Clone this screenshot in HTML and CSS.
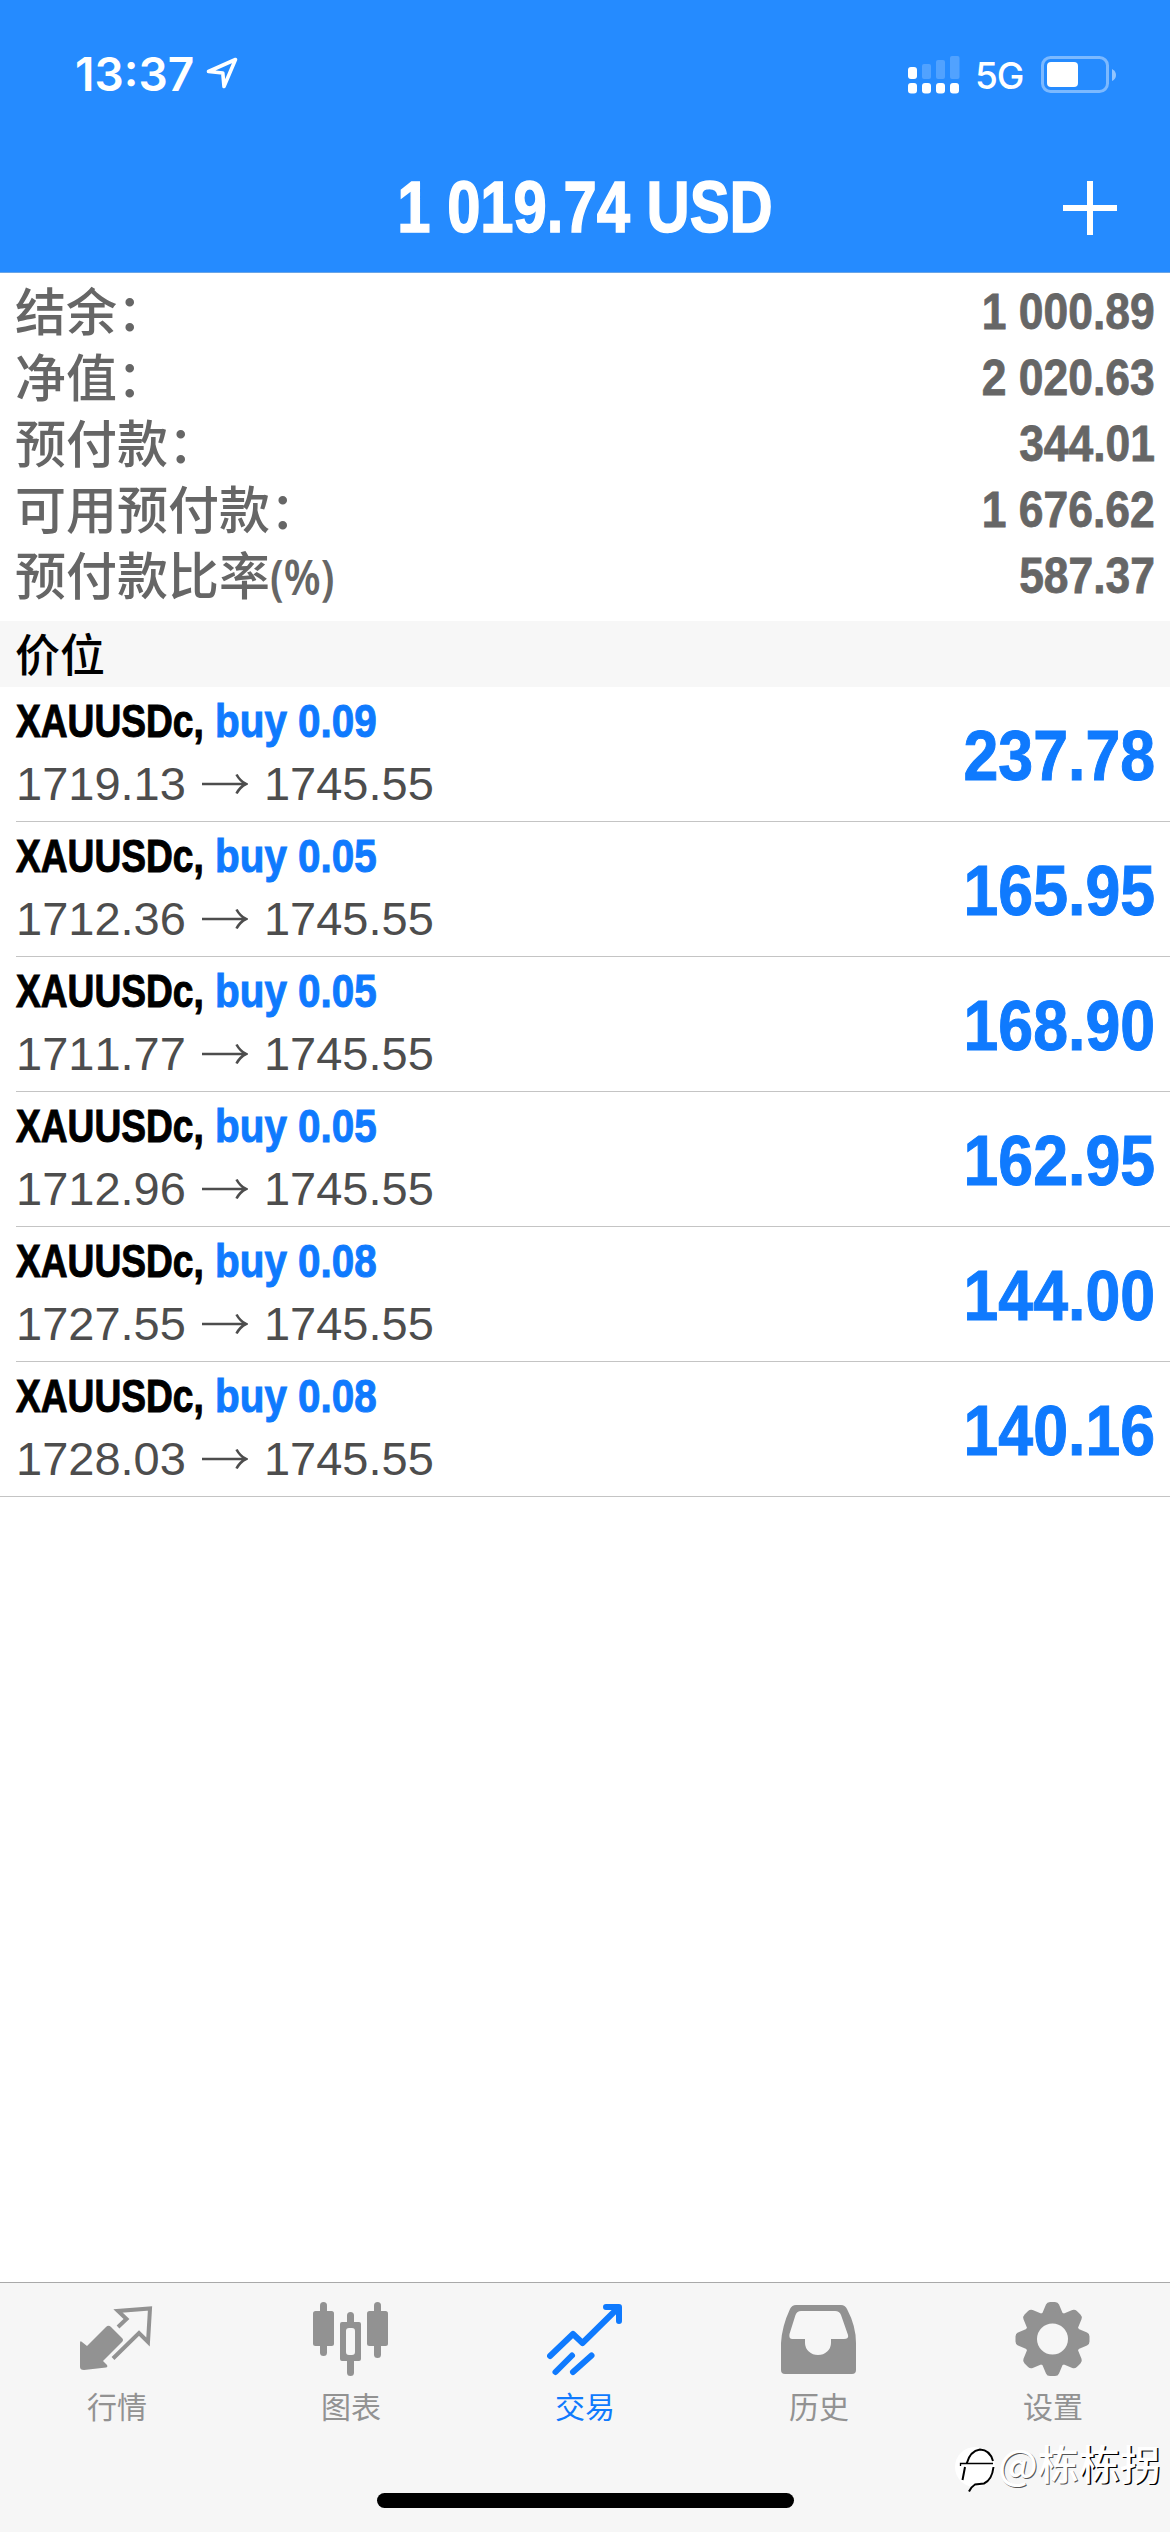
FILE: index.html
```html
<!DOCTYPE html>
<html lang="zh-CN">
<head>
<meta charset="utf-8">
<title>交易</title>
<link rel="stylesheet" href="styles.css">
</head>
<body>
<div class="app">
  <header class="header">
    <div class="status">
      <div class="status-left">
        <span class="time">13:37</span>
        <svg class="location" width="34" height="34" viewBox="0 0 34 34"><path d="M3.500 15.500 30.500 3.500 19 30.500 17.800 17Z" fill="none" stroke="#fff" stroke-width="3.600" stroke-linejoin="round"/></svg>
      </div>
      <div class="status-right">
        <svg width="52" height="38" viewBox="0 0 52 38" fill="#fff"><rect y="11" width="9" height="12" rx="3"/><g opacity=".2"><rect x="14" y="8" width="9" height="15" rx="2"/><rect x="28" y="4" width="9" height="19" rx="2"/><rect x="42" width="9.500" height="23" rx="2"/></g><rect y="27" width="9" height="10.500" rx="3"/><rect x="14" y="27" width="9" height="10.500" rx="3"/><rect x="28" y="27" width="9" height="10.500" rx="3"/><rect x="42" y="27" width="9" height="10.500" rx="3"/></svg>
        <span class="network">5G</span>
        <svg width="76" height="38" viewBox="0 0 76 38"><rect x="1.500" y="1.500" width="65" height="34" rx="8" fill="none" stroke="#fff" stroke-opacity=".4" stroke-width="3"/><rect x="6" y="6" width="31" height="25" rx="4" fill="#fff"/><path d="M71 13q4 2 4 6t-4 6z" fill="#fff" opacity=".5"/></svg>
      </div>
    </div>
    <div class="titlebar">
      <h1 class="total">1 019.74 USD</h1>
      <svg class="add" width="54" height="54" viewBox="0 0 54 54"><path d="M27 0v54M0 27h54" stroke="#fff" stroke-width="6"/></svg>
    </div>
  </header>

  <dl class="summary">
    <div class="summary-row"><dt>结余：</dt><dd>1 000.89</dd></div>
    <div class="summary-row"><dt>净值：</dt><dd>2 020.63</dd></div>
    <div class="summary-row"><dt>预付款：</dt><dd>344.01</dd></div>
    <div class="summary-row"><dt>可用预付款：</dt><dd>1 676.62</dd></div>
    <div class="summary-row"><dt>预付款比率<span class="percent">(%)</span></dt><dd>587.37</dd></div>
  </dl>

  <h2 class="section">价位</h2>
  <svg class="defs" width="0" height="0"><symbol id="arrow" viewBox="0 0 46 22"><path d="M0 11h43M34.500 1.500Q38 8 44 11Q38 14 34.500 20.500" fill="none" stroke="currentColor" stroke-width="2.600"/></symbol></svg>
  <ul class="positions">
    <li class="position"><div class="deal"><div class="name"><span class="symbol">XAUUSDc,</span><span class="side">buy 0.09</span></div><div class="prices"><span>1719.13</span><svg class="arrow"><use href="#arrow"/></svg><span>1745.55</span></div></div><div class="profit">237.78</div></li>
    <li class="position"><div class="deal"><div class="name"><span class="symbol">XAUUSDc,</span><span class="side">buy 0.05</span></div><div class="prices"><span>1712.36</span><svg class="arrow"><use href="#arrow"/></svg><span>1745.55</span></div></div><div class="profit">165.95</div></li>
    <li class="position"><div class="deal"><div class="name"><span class="symbol">XAUUSDc,</span><span class="side">buy 0.05</span></div><div class="prices"><span>1711.77</span><svg class="arrow"><use href="#arrow"/></svg><span>1745.55</span></div></div><div class="profit">168.90</div></li>
    <li class="position"><div class="deal"><div class="name"><span class="symbol">XAUUSDc,</span><span class="side">buy 0.05</span></div><div class="prices"><span>1712.96</span><svg class="arrow"><use href="#arrow"/></svg><span>1745.55</span></div></div><div class="profit">162.95</div></li>
    <li class="position"><div class="deal"><div class="name"><span class="symbol">XAUUSDc,</span><span class="side">buy 0.08</span></div><div class="prices"><span>1727.55</span><svg class="arrow"><use href="#arrow"/></svg><span>1745.55</span></div></div><div class="profit">144.00</div></li>
    <li class="position"><div class="deal"><div class="name"><span class="symbol">XAUUSDc,</span><span class="side">buy 0.08</span></div><div class="prices"><span>1728.03</span><svg class="arrow"><use href="#arrow"/></svg><span>1745.55</span></div></div><div class="profit">140.16</div></li>
  </ul>

  <footer class="footer">
    <nav class="tabs">
      <a class="tab">
        <svg class="icon" viewBox="0 0 76 76"><path fill="currentColor" d="M1 42q0-3 2-1l5 4L27 26q2.500-2.500 5 0L43 37q2 2 0 4L24 60l4 4q1 2-1 2.500L5 69q-4 0-4-3z"/><path fill="none" stroke="currentColor" stroke-width="4" d="M39 26 47.500 18 39 10 71 7.500 69 41 60 32 34 57.500"/></svg>
        <span>行情</span>
      </a>
      <a class="tab">
        <svg class="icon" viewBox="0 0 76 76" fill="currentColor"><rect x="0" y="10" width="21" height="35" rx="2.500"/><rect x="7" y="1" width="7" height="54" rx="3.500"/><rect x="54" y="10" width="21" height="35" rx="2.500"/><rect x="61" y="1" width="7" height="56" rx="3.500"/><path fill-rule="evenodd" d="M29 21h17q2 0 2 2v35q0 2-2 2H29q-2 0-2-2V23q0-2 2-2zM36 27q-3 0-3 3v21q0 3 3 3h3q3 0 3-3V30q0-3-3-3z"/><path d="M34 22V14.500a3.500 3.500 0 0 1 7 0V22zM34 59v12.500a3.500 3.500 0 0 0 7 0V59z"/></svg>
        <span>图表</span>
      </a>
      <a class="tab active">
        <svg class="icon" viewBox="0 0 76 76" fill="none" stroke="currentColor" stroke-width="6" stroke-linecap="round"><path stroke-linejoin="round" d="M3 55 26 33 35.500 42 71 7"/><path stroke-linejoin="round" d="M59 6H72V20"/><path d="M8.500 71 25 54.500M26 71 44.500 54.500"/><path d="M62 5h12v13z" fill="currentColor" stroke="none"/></svg>
        <span>交易</span>
      </a>
      <a class="tab">
        <svg class="icon" viewBox="0 0 76 76"><path fill="currentColor" fill-rule="evenodd" d="M15 4H60q4 0 6 4 9 17 9 34V69q0 4-4 4H4q-4 0-4-4V42Q1 25 9 8q2-4 6-4zM20 10q-4 0-5.500 4L8.500 33q-1 5 3 5H24v4a13 12 0 0 0 26 0V38H63q5 0 4-4L60 14q-1.500-4-6-4z"/></svg>
        <span>历史</span>
      </a>
      <a class="tab">
        <svg class="icon" viewBox="0 0 76 76"><g fill="currentColor"><path id="teeth" d="M27 13 31 3.500Q32 1 35 1H40Q43 1 44 3.500L48 13 48 63 44 72.500Q43 75 40 75H35Q32 75 31 72.500L27 63z"/><use href="#teeth" transform="rotate(45 37.500 38)"/><use href="#teeth" transform="rotate(90 37.500 38)"/><use href="#teeth" transform="rotate(135 37.500 38)"/><circle cx="37.500" cy="38" r="28"/></g><circle cx="37.500" cy="38" r="15.500" fill="#f6f6f6"/></svg>
        <span>设置</span>
      </a>
    </nav>
    <div class="home-indicator"></div>
    <div class="watermark">
      <svg width="42" height="50" viewBox="0 0 42 50"><circle cx="20" cy="20" r="20" fill="#fff"/><g fill="none" stroke="#000"><path d="M5.500 19v-2.500H38" stroke-width="1.300"/><path d="M11.700 16.500Q15 4 25 2.500 35 3 38 14M10 20 7.500 33M38.500 20Q37 33 29 36.500L20 37.500Q16 40 14 44.500" stroke-width="2"/></g></svg>
      <span class="handle"><span class="faint">@栋</span>栋拐</span>
    </div>
  </footer>
</div>
</body>
</html>
```
FILE: styles.css
```css
* { box-sizing: border-box; }
body, h1, h2, dl, dd, ul { margin: 0; padding: 0; }
body {
  background: #fff;
  font-family: "Liberation Sans", "Noto Sans CJK SC", sans-serif;
  font-kerning: none;
}
.app {
  display: flex;
  flex-direction: column;
  width: 1170px;
  height: 2532px;
  overflow: hidden;
}
.defs { display: none; }
.header {
  height: 273px;
  background: #258bff;
  border-bottom: 1px solid #6aa5e6;
  color: #fff;
}
.status {
  display: flex;
  justify-content: space-between;
  height: 140px;
  padding: 56px 53px 0 75px;
}
.status-left, .status-right { display: flex; align-items: flex-start; }
.time {
  width: 130px;
  font: 600 46px/37px Inter, sans-serif;
}
.network {
  width: 48px;
  margin: 0 18px 0 15px;
  font: 500 37px/40px Inter, sans-serif;
  letter-spacing: -1px;
}
.titlebar {
  display: grid;
  grid-template-columns: 1fr 700px 1fr;
  align-items: center;
  height: 133px;
}
.total {
  grid-column: 2;
  font-size: 72px;
  line-height: 135px;
  text-align: center;
  transform: scaleX(.83);
  -webkit-text-stroke: 1.5px #fff;
}
.add { justify-self: end; margin-right: 53px; }
.summary { height: 348px; padding: 6px 15px 0; }
.summary-row {
  display: flex;
  justify-content: space-between;
  height: 66px;
  color: #666;
  line-height: 66px;
}
.summary dt {
  font-family: "Noto Sans CJK SC", sans-serif;
  font-size: 51px;
  font-weight: 500;
  line-height: 60px;
}
.percent {
  display: inline-block;
  font-family: "Noto Sans", sans-serif;
  font-size: 48px;
  font-weight: 600;
  line-height: 60px;
  transform: scaleX(.88);
  transform-origin: left;
}
.summary dd {
  font-size: 50px;
  font-weight: 700;
  line-height: 67px;
  transform: scaleX(.888);
  transform-origin: right;
  -webkit-text-stroke: .8px;
}
.section {
  height: 66px;
  padding-left: 15px;
  background: #f7f7f7;
  color: #000;
  font: 500 45px/63px "Noto Sans CJK SC", sans-serif;
}
.positions { list-style: none; }
.position {
  display: flex;
  justify-content: space-between;
  height: 135px;
  margin-left: 16px;
  padding-right: 15px;
  border-bottom: 1px solid #c4c4c4;
}
.position:last-child { margin-left: 0; padding-left: 16px; }
.deal { padding-top: 2px; }
.name {
  display: flex;
  height: 63px;
  font-size: 47px;
  font-weight: 700;
  line-height: 63px;
  -webkit-text-stroke: 1px;
}
.symbol {
  width: 199px;
  color: #000;
  transform: scaleX(.79);
  transform-origin: left;
}
.side {
  color: #0f7afe;
  transform: scaleX(.86);
  transform-origin: left;
}
.prices {
  display: flex;
  align-items: center;
  height: 63px;
  color: #4d4d4d;
  font-size: 47px;
  line-height: 63px;
}
.arrow { width: 46px; height: 22px; margin: 0 16px; }
.profit {
  color: #0f7afe;
  font-size: 70px;
  font-weight: 700;
  line-height: 139px;
  transform: scaleX(.895);
  transform-origin: right;
  -webkit-text-stroke: 1px;
}
.footer {
  position: relative;
  display: flex;
  flex-direction: column;
  align-items: center;
  height: 250px;
  margin-top: auto;
  background: #f6f6f6;
  border-top: 1px solid #a9a9a9;
}
.tabs {
  display: grid;
  grid-template-columns: repeat(5, 1fr);
  width: 100%;
  height: 210px;
}
.tab {
  display: flex;
  flex-direction: column;
  align-items: center;
  padding-top: 18px;
  color: #929292;
  font: 400 30px/44px "Noto Sans CJK SC", sans-serif;
}
.tab.active { color: #0f7afe; }
.tab span { margin-top: 6px; }
.icon { width: 76px; height: 76px; }
.home-indicator {
  width: 417px;
  height: 15px;
  border-radius: 8px;
  background: #000;
}
.watermark {
  position: absolute;
  top: 164px;
  left: 955px;
  display: flex;
  gap: 1px;
}
.handle {
  margin-top: -8px;
  color: #fff;
  font: 500 41px/46px "Noto Sans CJK SC", sans-serif;
  text-shadow: 1.5px 1px 0 #000;
}
.faint { text-shadow: 1px 1px 0 #555; }
```
